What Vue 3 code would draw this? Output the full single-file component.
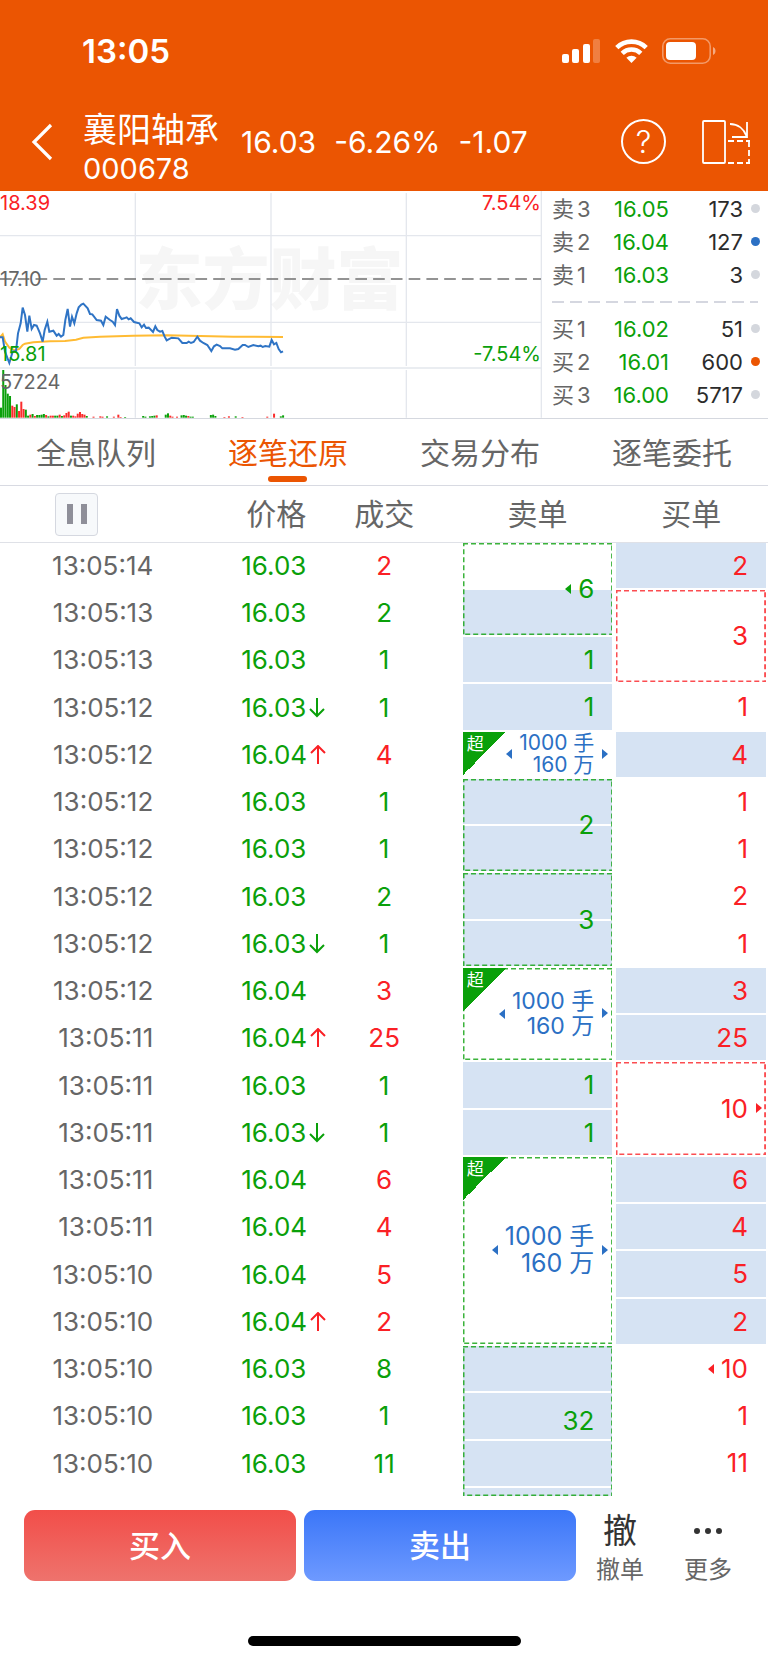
<template>
  <div class="page">
    <header class="header">
      <div class="status-bar">
        <span class="clock">13:05</span>
        <div class="status-icons">
          <svg width="39" height="25" viewBox="0 0 39 25" fill="#fff">
            <rect x="0" y="15" width="7" height="9" rx="2" />
            <rect x="10" y="10" width="7" height="14" rx="2" />
            <rect x="21" y="5" width="7" height="19" rx="2" />
            <rect x="31" y="0" width="7" height="24" rx="2" opacity="0.25" />
          </svg>
          <svg width="33" height="25" viewBox="0 0 33 25" fill="none" stroke="#fff" stroke-width="4.6">
            <path d="M1.8 8.6a21 21 0 0 1 29.4 0" />
            <path d="M7.2 14.3a13.4 13.4 0 0 1 18.6 0" />
            <path d="M11.4 18.7a7.4 7.4 0 0 1 10.2 0L16.5 24z" fill="#fff" stroke="none" />
          </svg>
          <svg width="54" height="26" viewBox="0 0 54 26">
            <rect x="0.8" y="0.8" width="47.4" height="24.4" rx="7.5" fill="none" stroke="#fff" stroke-opacity="0.4" stroke-width="1.6" />
            <rect x="4" y="4" width="30" height="18" rx="4" fill="#fff" />
            <path d="M51 9v8c1.600-.7 2.500-2.200 2.500-4s-.9-3.300-2.500-4z" fill="#fff" opacity="0.5" />
          </svg>
        </div>
      </div>
      <div class="nav-bar">
        <button class="icon-btn back" aria-label="返回">
          <svg width="22" height="38" viewBox="0 0 22 38" fill="none" stroke="#fff" stroke-width="3.2">
            <path d="M20 2L3 19l17 17" />
          </svg>
        </button>
        <h1 class="stock">
          <span class="stock-name">襄阳轴承</span>
          <span class="stock-code">000678</span>
        </h1>
        <div class="quote">
          <span>16.03</span>
          <span>-6.26%</span>
          <span>-1.07</span>
        </div>
        <button class="icon-btn help" aria-label="帮助">?</button>
        <button class="icon-btn" aria-label="横屏">
          <svg width="48" height="46" viewBox="0 0 48 46" fill="none" stroke="#fff" stroke-width="1.800">
            <rect x="1" y="2" width="22" height="42" rx="1" />
            <path d="M28 5c8 0 14 5 16.500 12M45 3v15H30" />
            <path d="M26 22h22M26 44h22M47 22v22" stroke-dasharray="6 3" />
          </svg>
        </button>
      </div>
    </header>

    <section class="market">
      <div class="chart">
        <span class="watermark">东方财富</span>
        <svg class="chart-svg" viewBox="0 18 1626 681" preserveAspectRatio="none" fill="none">
          <g stroke="#e4e7ed" stroke-width="4">
            <path d="M0 152H1623M0 412H1623M0 549H1623" />
            <path d="M406 24V543M406 555V698M813 24V543M813 555V698M1219 24V543M1219 555V698M1624 18V698" />
          </g>
          <path d="M0 282H1623" stroke="#707070" stroke-width="4" stroke-dasharray="35 18.300" />
          <rect
            v-for="bar in volumeBars"
            :key="bar[0]"
            :x="bar[0] * 6.77"
            :y="698 - bar[2]"
            width="6"
            :height="bar[2]"
            :fill="bar[1] === 'up' ? '#fa2d2d' : '#0aa00a'"
          />
          <polyline :points="avgLine" stroke="#ffbb33" stroke-width="6" />
          <polyline :points="priceLine" stroke="#2f74c5" stroke-width="6" />
        </svg>
        <span class="label top-left up">18.39</span>
        <span class="label top-right up">7.54%</span>
        <span class="label middle">17.10</span>
        <span class="label low-left down">15.81</span>
        <span class="label low-right down">-7.54%</span>
        <span class="label volume">57224</span>
      </div>
      <div class="depth">
        <div v-for="item in asks" :key="item.level" class="depth-row">
          <span class="depth-name">{{ item.name }}<b>{{ item.level }}</b></span>
          <span class="depth-price">{{ item.price }}</span>
          <span class="depth-volume">{{ item.volume }}</span>
          <i class="dot" :class="item.dot"></i>
        </div>
        <svg class="depth-line" height="2">
          <path d="M0 1H206" stroke="#d5d7e0" stroke-width="2" stroke-dasharray="12 6" />
        </svg>
        <div v-for="item in bids" :key="item.level" class="depth-row">
          <span class="depth-name">{{ item.name }}<b>{{ item.level }}</b></span>
          <span class="depth-price">{{ item.price }}</span>
          <span class="depth-volume">{{ item.volume }}</span>
          <i class="dot" :class="item.dot"></i>
        </div>
      </div>
    </section>

    <nav class="tabs">
      <button
        v-for="tab in tabs"
        :key="tab"
        class="tab"
        :class="{ active: tab === activeTab }"
        @click="activeTab = tab"
      >
        {{ tab }}
      </button>
    </nav>

    <table class="ticks">
      <colgroup>
        <col class="col-time" />
        <col class="col-price" />
        <col class="col-qty" />
        <col class="col-order" />
        <col class="col-order" />
      </colgroup>
      <thead>
        <tr>
          <th class="time">
            <button class="pause" aria-label="暂停" @click="paused = !paused">
              <svg width="20" height="20" viewBox="0 0 20 20" fill="#8f8f99">
                <rect x="0" y="0" width="6" height="20" />
                <rect x="14" y="0" width="6" height="20" />
              </svg>
            </button>
          </th>
          <th class="price">价格</th>
          <th class="qty">成交</th>
          <th>卖单</th>
          <th>买单</th>
        </tr>
      </thead>
      <tbody>
        <tr v-for="(row, i) in rows" :key="i">
          <td class="time">{{ row.time }}</td>
          <td class="price down">
            {{ row.price }}<svg
              v-if="row.arrow"
              class="arrow"
              :class="row.arrow"
              width="16"
              height="20"
              viewBox="0 0 16 20"
              fill="none"
              stroke="currentColor"
              stroke-width="2"
            >
              <path v-if="row.arrow === 'up'" d="M8 19V1M1 8l7-7 7 7" />
              <path v-else d="M8 0v18M1 11l7 7 7-7" />
            </svg>
          </td>
          <td class="qty" :class="row.dir">{{ row.qty }}</td>
          <template v-for="side in ['sell', 'buy']" :key="side">
            <td v-if="row[side]" class="order" :class="side" :rowspan="row[side].span || 1">
              <div class="fill">
                <i
                  v-for="(on, n) in row[side].stripes || []"
                  :key="n"
                  class="stripe"
                  :class="{ on, sliver: n === 3 }"
                ></i>
              </div>
              <svg v-if="row[side].box" class="box">
                <rect width="100%" height="100%" />
              </svg>
              <span v-if="row[side].big" class="badge"><em>超</em></span>
              <span class="amount" :class="row[side].big">
                <i v-if="row[side].left" class="tri tri-left"></i>
                <span v-if="row[side].big" class="big-text">
                  <span>1000 手</span>
                  <span>160 万</span>
                </span>
                <span v-else>{{ row[side].text }}</span>
              </span>
              <i v-if="row[side].right" class="tri tri-right"></i>
            </td>
          </template>
        </tr>
      </tbody>
    </table>

    <footer class="footer">
      <button class="trade buy-btn">买入</button>
      <button class="trade sell-btn">卖出</button>
      <div class="actions">
        <button class="action">
          <span class="action-icon">撤</span>
          <span>撤单</span>
        </button>
        <button class="action">
          <span class="action-icon">
            <svg width="30" height="8" viewBox="0 0 30 8" fill="#333">
              <circle cx="4" cy="4" r="3" />
              <circle cx="15" cy="4" r="3" />
              <circle cx="26" cy="4" r="3" />
            </svg>
          </span>
          <span>更多</span>
        </button>
      </div>
    </footer>
    <div class="home-indicator"></div>
  </div>
</template>

<script setup>
import { ref } from 'vue'

const tabs = ['全息队列', '逐笔还原', '交易分布', '逐笔委托']
const activeTab = ref('逐笔还原')
const paused = ref(false)

const asks = [
  { name: '卖', level: 3, price: '16.05', volume: 173 },
  { name: '卖', level: 2, price: '16.04', volume: 127, dot: 'blue' },
  { name: '卖', level: 1, price: '16.03', volume: 3 }
]
const bids = [
  { name: '买', level: 1, price: '16.02', volume: 51 },
  { name: '买', level: 2, price: '16.01', volume: 600, dot: 'orange' },
  { name: '买', level: 3, price: '16.00', volume: 5717 }
]

// 分时线
const priceLine =
  '0,457 8,457 15,500 28,534 38,500 48,498 54,445 62,415 68,368 75,390 82,440 88,392 95,432 102,420 110,422 ' +
  '120,445 128,470 134,435 142,410 148,440 160,437 170,452 176,447 183,455 190,450 196,405 203,372 210,425 ' +
  '216,395 223,415 230,385 236,367 244,359 250,356 263,370 270,387 277,388 290,405 303,407 310,420 317,395 ' +
  '330,405 338,410 345,420 351,372 358,392 365,402 372,400 380,397 386,403 392,400 402,411 418,415 425,427 ' +
  '432,419 438,429 446,428 459,441 466,424 472,435 480,440 487,438 494,455 500,466 515,458 535,460 547,474 ' +
  '560,474 566,470 573,474 581,471 592,455 600,467 610,474 622,480 634,498 642,484 650,479 660,483 667,490 ' +
  '690,490 705,494 715,492 728,480 735,480 745,486 760,480 775,484 782,482 788,486 796,483 808,485 815,465 ' +
  '822,478 829,474 836,492 843,502 849,499'

// 均价线
const avgLine =
  '0,457 8,448 15,470 28,488 45,496 58,492 68,480 75,476 100,472 150,469 195,468 228,464 250,458 300,455 ' +
  '400,452 500,451 600,453 700,455 849,456'

// 成交量：[位置, 方向, 高度]
const volumeBars = [
  [0, 'down', 30], [1, 'down', 143], [2, 'down', 98], [3, 'down', 72], [4, 'down', 65], [5, 'up', 36],
  [6, 'up', 32], [7, 'down', 40], [8, 'up', 20], [9, 'up', 48], [10, 'up', 26], [11, 'down', 24],
  [12, 'down', 6], [13, 'up', 9], [14, 'down', 11], [15, 'up', 5], [16, 'down', 8], [17, 'down', 8],
  [18, 'down', 9], [19, 'down', 11], [20, 'up', 8], [21, 'down', 4], [22, 'up', 6], [23, 'up', 6],
  [24, 'down', 6], [25, 'down', 6], [26, 'up', 9], [27, 'down', 5], [28, 'up', 7], [29, 'up', 14],
  [30, 'up', 18], [31, 'down', 6], [32, 'up', 6], [33, 'up', 4], [34, 'up', 12], [35, 'up', 17],
  [36, 'up', 11], [37, 'up', 9], [38, 'down', 5], [41, 'up', 3], [44, 'up', 4], [45, 'up', 3],
  [47, 'down', 4], [50, 'up', 3], [52, 'up', 9], [53, 'up', 2], [55, 'down', 2], [63, 'down', 5],
  [64, 'down', 3], [66, 'down', 4], [67, 'down', 5], [68, 'down', 6], [69, 'up', 7], [73, 'down', 9],
  [74, 'down', 13], [75, 'up', 6], [76, 'up', 3], [78, 'up', 3], [80, 'down', 7], [81, 'down', 8],
  [82, 'down', 6], [83, 'up', 5], [84, 'down', 3], [85, 'down', 3], [93, 'down', 8], [94, 'down', 9],
  [95, 'down', 5], [99, 'up', 2], [101, 'up', 4], [104, 'down', 4], [107, 'up', 2], [118, 'up', 3],
  [121, 'up', 12], [124, 'down', 4], [125, 'down', 7]
]

// 逐笔成交，sell / buy 为对应的委托单
const rows = [
  {
    time: '13:05:14', price: '16.03', qty: 2, dir: 'up',
    sell: { text: 6, span: 2, stripes: [false, true], box: true, left: true },
    buy: { text: 2, stripes: [true] }
  },
  { time: '13:05:13', price: '16.03', qty: 2, dir: 'down', buy: { text: 3, span: 2, box: true } },
  { time: '13:05:13', price: '16.03', qty: 1, dir: 'down', sell: { text: 1, stripes: [true] } },
  {
    time: '13:05:12', price: '16.03', arrow: 'down', qty: 1, dir: 'down',
    sell: { text: 1, stripes: [true] },
    buy: { text: 1 }
  },
  {
    time: '13:05:12', price: '16.04', arrow: 'up', qty: 4, dir: 'up',
    sell: { big: 'small', left: true, right: true },
    buy: { text: 4, stripes: [true] }
  },
  {
    time: '13:05:12', price: '16.03', qty: 1, dir: 'down',
    sell: { text: 2, span: 2, stripes: [true, true], box: true },
    buy: { text: 1 }
  },
  { time: '13:05:12', price: '16.03', qty: 1, dir: 'down', buy: { text: 1 } },
  {
    time: '13:05:12', price: '16.03', qty: 2, dir: 'down',
    sell: { text: 3, span: 2, stripes: [true, true], box: true },
    buy: { text: 2 }
  },
  { time: '13:05:12', price: '16.03', arrow: 'down', qty: 1, dir: 'down', buy: { text: 1 } },
  {
    time: '13:05:12', price: '16.04', qty: 3, dir: 'up',
    sell: { big: 'medium', span: 2, box: true, left: true, right: true },
    buy: { text: 3, stripes: [true] }
  },
  { time: '13:05:11', price: '16.04', arrow: 'up', qty: 25, dir: 'up', buy: { text: 25, stripes: [true] } },
  {
    time: '13:05:11', price: '16.03', qty: 1, dir: 'down',
    sell: { text: 1, stripes: [true] },
    buy: { text: 10, span: 2, box: true, right: true }
  },
  { time: '13:05:11', price: '16.03', arrow: 'down', qty: 1, dir: 'down', sell: { text: 1, stripes: [true] } },
  {
    time: '13:05:11', price: '16.04', qty: 6, dir: 'up',
    sell: { big: 'large', span: 4, box: true, left: true, right: true },
    buy: { text: 6, stripes: [true] }
  },
  { time: '13:05:11', price: '16.04', qty: 4, dir: 'up', buy: { text: 4, stripes: [true] } },
  { time: '13:05:10', price: '16.04', qty: 5, dir: 'up', buy: { text: 5, stripes: [true] } },
  { time: '13:05:10', price: '16.04', arrow: 'up', qty: 2, dir: 'up', buy: { text: 2, stripes: [true] } },
  {
    time: '13:05:10', price: '16.03', qty: 8, dir: 'down',
    sell: { text: 32, span: 4, stripes: [true, true, true, true], box: true },
    buy: { text: 10, left: true }
  },
  { time: '13:05:10', price: '16.03', qty: 1, dir: 'down', buy: { text: 1 } },
  { time: '13:05:10', price: '16.03', qty: 11, dir: 'down', buy: { text: 11 } },
  {}
]
</script>

<style>
body {
  margin: 0;
  background: #fff;
}
</style>

<style scoped>
.page {
  background: #fff;
  color: #666;
  font-family: Inter, "Noto Sans CJK SC", sans-serif;
  font-size: 26px;
}

button {
  margin: 0;
  padding: 0;
  border: none;
  background: none;
  color: inherit;
  font-family: inherit;
  cursor: pointer;
}

svg {
  display: block;
}

.up {
  color: #fa2025;
}

.down {
  color: #0aa00a;
}

/* 顶部 */
.header {
  background: #eb5502;
  color: #fff;
}

.status-bar {
  display: flex;
  align-items: center;
  justify-content: space-between;
  height: 62px;
  padding: 20px 52px 12px 82px;
}

.clock {
  font-size: 33px;
  font-weight: 600;
}

.status-icons {
  display: flex;
  align-items: center;
  gap: 14px;
}

.nav-bar {
  display: flex;
  align-items: center;
  height: 95px;
  padding: 0 18px 2px 31px;
}

.icon-btn {
  flex: none;
}

.stock {
  display: flex;
  flex-direction: column;
  margin: 12px 22px 0 30px;
  font-weight: 400;
}

.stock-name {
  font-size: 34px;
  line-height: 42px;
}

.stock-code {
  font-size: 29px;
  line-height: 36px;
}

.quote {
  display: flex;
  flex: 1;
  gap: 18px;
  font-size: 30px;
}

.help {
  width: 45px;
  height: 45px;
  margin-right: 36px;
  border: 2px solid #fff;
  border-radius: 50%;
  font-size: 31px;
  font-weight: 300;
  line-height: 40px;
}

/* 分时图与盘口 */
.market {
  display: flex;
  height: 227px;
  border-bottom: 1px solid #d5d8df;
}

.chart {
  position: relative;
  flex: none;
  width: 71%;
  max-width: 542px;
}

.chart-svg {
  position: relative;
  width: 100%;
  height: 100%;
}

.watermark {
  position: absolute;
  top: 45px;
  left: 25%;
  color: #f6f6f6;
  font-size: 67px;
  font-weight: 900;
  line-height: 88px;
}

.label {
  position: absolute;
  font-size: 20px;
  line-height: 24px;
}

.top-left {
  top: 0;
  left: 0;
}

.top-right {
  top: 0;
  right: 1px;
}

.middle {
  top: 76px;
  left: 0;
}

.low-left {
  top: 151px;
  left: 0;
}

.low-right {
  top: 151px;
  right: 1px;
}

.volume {
  top: 179px;
  left: 0;
}

.depth {
  flex: 1;
  min-width: 0;
  padding: 1px 8px 0 10px;
}

.depth-row {
  display: grid;
  grid-template-columns: 40px 1fr 66px 9px;
  align-items: center;
  column-gap: 8px;
  height: 33px;
  font-size: 22px;
  line-height: 28px;
}

.depth-name {
  white-space: nowrap;
}

.depth-name b {
  margin-left: 3px;
  font-weight: 400;
}

.depth-price {
  color: #0aa00a;
  text-align: right;
}

.depth-volume {
  color: #2b2b2b;
  text-align: right;
}

.depth-line {
  width: 100%;
  margin: 10px 0 9px;
}

.dot {
  width: 9px;
  height: 9px;
  border-radius: 50%;
  background: #d4d7dd;
}

.dot.blue {
  background: #2b70c4;
}

.dot.orange {
  background: #eb5502;
}

/* 标签页 */
.tabs {
  display: flex;
  height: 66px;
  border-bottom: 1px solid #d8dae2;
}

.tab {
  position: relative;
  flex: 1;
  padding-bottom: 3px;
  font-size: 30px;
}

.tab.active {
  color: #eb5502;
}

.tab.active::after {
  content: "";
  position: absolute;
  bottom: 3px;
  left: 50%;
  width: 39px;
  height: 6px;
  margin-left: -20px;
  border-radius: 3px;
  background: #eb5502;
}

/* 逐笔列表 */
.ticks {
  width: 100%;
  table-layout: fixed;
  border-spacing: 0;
}

.col-time,
.col-price {
  width: 21%;
}

.col-qty {
  width: 18%;
}

.col-order {
  width: 20%;
}

.ticks th {
  height: 56px;
  padding: 0;
  border-bottom: 1px solid #dfe1e7;
  font-size: 30px;
  font-weight: 400;
  line-height: 40px;
}

.ticks td {
  box-sizing: border-box;
  height: 47px;
  padding: 0 0 1px;
  line-height: 32px;
}

.ticks tr:nth-child(4n) td {
  height: 48px;
}

.ticks tr:last-child td {
  height: 10px;
  padding-bottom: 0;
  line-height: 0;
}

.ticks td.time {
  padding-right: 8px;
  text-align: right;
}

.ticks th.time {
  padding-left: 55px;
  text-align: left;
}

.ticks .price {
  padding-left: 80px;
  text-align: left;
  white-space: nowrap;
}

.ticks th.price {
  padding-left: 85px;
}

.ticks .qty {
  padding-right: 15px;
  text-align: center;
}

.pause {
  display: flex;
  align-items: center;
  justify-content: center;
  width: 43px;
  height: 43px;
  border: 1px solid #d5d8e0;
  border-radius: 4px;
  background: #f7f9fb;
}

.arrow {
  display: inline-block;
  margin-left: 3px;
  vertical-align: -1px;
}

.ticks td.order {
  position: relative;
  padding: 0 20px 3px 0;
  text-align: right;
}

.sell {
  color: #0aa00a;
}

.buy {
  color: #fa2025;
}

.fill {
  position: absolute;
  inset: 0 2px 2px;
  display: flex;
  flex-direction: column;
  gap: 2px;
}

.stripe {
  flex: 1;
}

.stripe.on {
  background: #d6e3f3;
}

.stripe.sliver {
  flex: 0 0 8px;
}

.box {
  position: absolute;
  top: 0;
  left: 2px;
  width: calc(100% - 4px);
  height: calc(100% - 2px);
}

.box rect {
  fill: none;
  stroke: currentColor;
  stroke-width: 3;
  stroke-dasharray: 5 3;
  opacity: 0.8;
}

.amount {
  position: relative;
  display: inline-flex;
  align-items: center;
  gap: 7px;
  vertical-align: middle;
}

.big-text {
  display: flex;
  flex-direction: column;
}

.amount.small,
.amount.medium,
.amount.large {
  color: #2b70c4;
}

.small {
  font-size: 21px;
  line-height: 22px;
}

.medium {
  font-size: 23px;
  line-height: 25px;
}

.large {
  font-size: 25px;
  line-height: 27px;
}

.tri {
  border: 5px solid transparent;
}

.tri-left {
  border-right: 6px solid;
  border-left: 0;
}

.tri-right {
  position: absolute;
  top: 50%;
  right: 6px;
  margin-top: -7px;
  border-right: 0;
  border-left: 6px solid;
}

.sell .tri {
  border-left-color: #2b70c4;
}

.badge {
  position: absolute;
  top: 0;
  left: 2px;
  width: 43px;
  height: 43px;
  background: linear-gradient(135deg, #0aa00a 50%, transparent 50%);
  color: #fff;
  text-align: left;
}

.badge em {
  display: block;
  padding: 2px 0 0 4px;
  font-size: 17px;
  font-style: normal;
  line-height: 20px;
}

/* 底部 */
.footer {
  display: flex;
  gap: 8px;
  height: 71px;
  padding: 12px 24px 55px;
}

.trade {
  flex: 1;
  padding-bottom: 4px;
  border-radius: 11px;
  color: #fff;
  font-size: 31px;
  font-weight: 500;
}

.buy-btn {
  background: linear-gradient(#f24e49, #ee736d);
}

.sell-btn {
  background: linear-gradient(#3b76f8, #6e9aff);
}

.actions {
  display: flex;
  gap: 16px;
}

.action {
  display: flex;
  flex-direction: column;
  align-items: center;
  justify-content: flex-start;
  width: 72px;
  font-size: 24px;
  line-height: 36px;
}

.action-icon {
  display: flex;
  flex: none;
  align-items: center;
  height: 42px;
  color: #333;
  font-size: 34px;
}

.home-indicator {
  width: 273px;
  height: 10px;
  margin: 0 auto;
  border-radius: 5px;
  background: #000;
}
</style>
